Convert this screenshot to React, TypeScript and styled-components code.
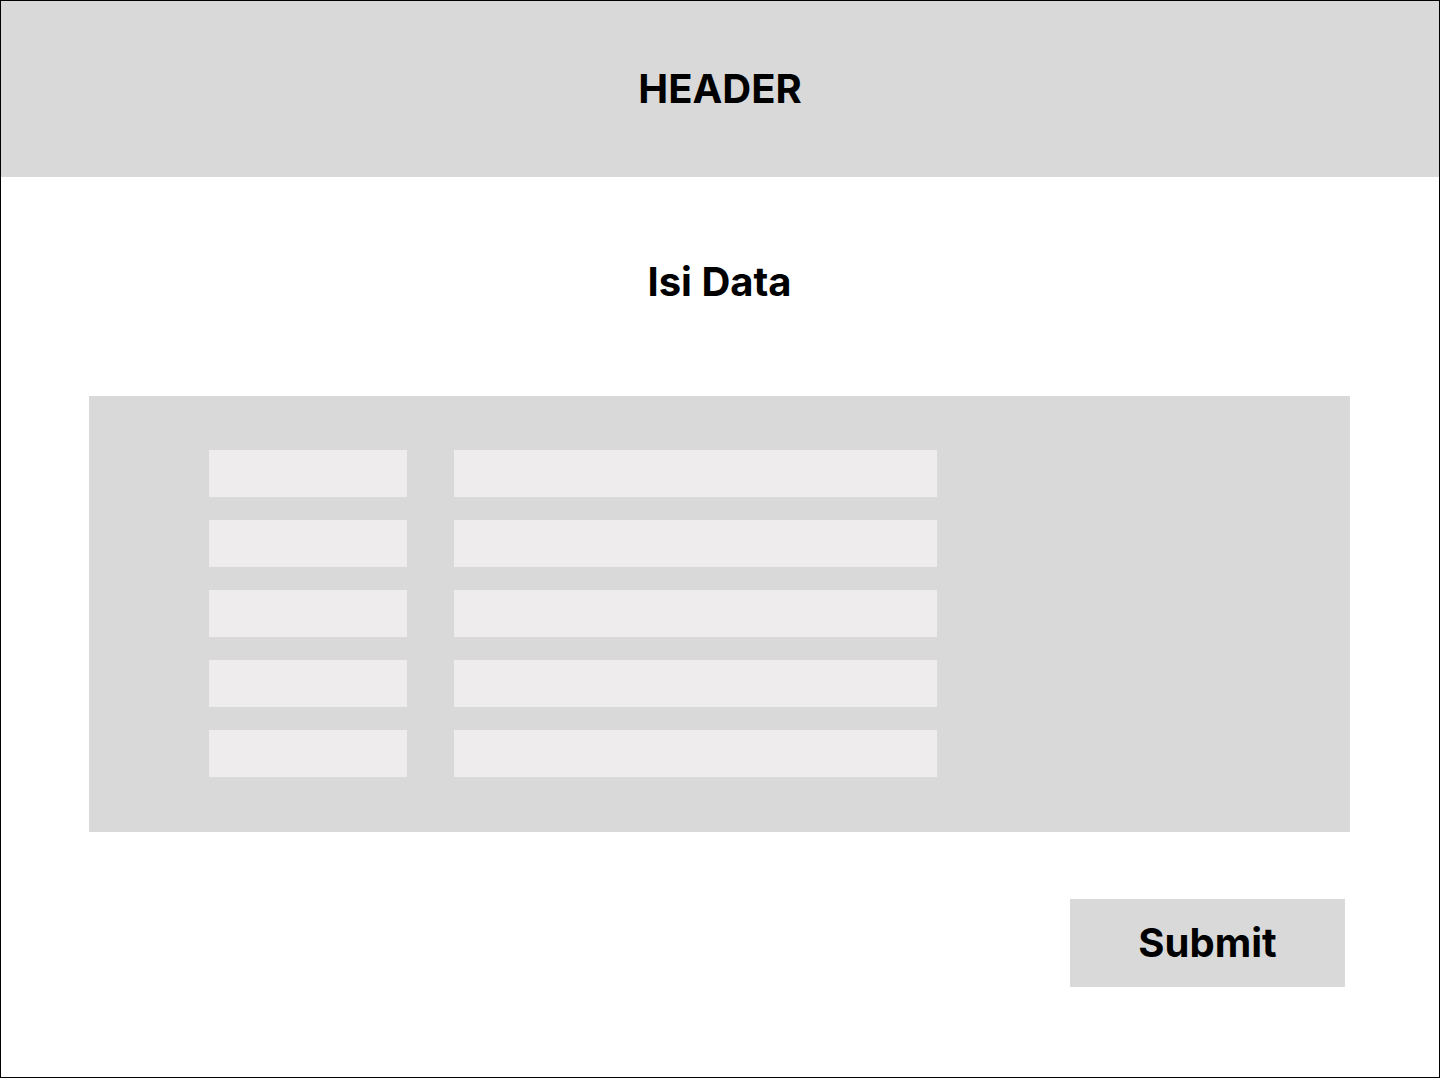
import React from "react";
import styled, { createGlobalStyle } from "styled-components";

const GlobalStyle = createGlobalStyle`
  *, *::before, *::after {
    box-sizing: border-box;
  }

  body {
    margin: 0;
    background: #ffffff;
    color: #000000;
    font-family: Inter, "Liberation Sans", sans-serif;
  }
`;

const Page = styled.div`
  display: flex;
  flex-direction: column;
  min-height: 100vh;
  border: 1px solid #000000;
`;

const Header = styled.header`
  display: flex;
  align-items: center;
  justify-content: center;
  padding: 64px 24px;
  background: #d9d9d9;
`;

const Heading = styled.h1`
  margin: 0;
  font-size: 40px;
  font-weight: 700;
  line-height: 48px;
  text-align: center;
`;

const Main = styled.main`
  padding: 81px 89px 81px 88px;
`;

const Form = styled.form`
  display: flex;
  flex-direction: column;
  margin-top: 90px;
`;

const Panel = styled.div`
  display: flex;
  flex-direction: column;
  gap: 23px;
  padding: 54px 120px 55px;
  background: #d9d9d9;
`;

const Row = styled.div`
  display: grid;
  grid-template-columns: minmax(0, 198px) minmax(0, 483px);
  gap: 47px;
`;

const Label = styled.label`
  height: 47px;
  background: #eeecec;
`;

const Field = styled.input`
  width: 100%;
  height: 47px;
  padding: 0 16px;
  border: 0;
  border-radius: 0;
  background: #eeecec;
  font: inherit;
`;

const Actions = styled.div`
  display: flex;
  justify-content: flex-end;
  padding: 67px 5px 0;
`;

const SubmitButton = styled.button`
  min-width: 275px;
  padding: 20px 24px;
  border: 0;
  background: #d9d9d9;
  color: inherit;
  font-family: inherit;
  font-size: 40px;
  font-weight: 700;
  line-height: 48px;
  cursor: pointer;
`;

const fields = ["field-1", "field-2", "field-3", "field-4", "field-5"];

export default function App() {
  return (
    <>
      <GlobalStyle />
      <Page>
        <Header>
          <Heading>HEADER</Heading>
        </Header>
        <Main>
          <Heading as="h2">Isi Data</Heading>
          <Form onSubmit={(event: React.FormEvent) => event.preventDefault()}>
            <Panel>
              {fields.map((id) => (
                <Row key={id}>
                  <Label htmlFor={id} />
                  <Field id={id} name={id} type="text" />
                </Row>
              ))}
            </Panel>
            <Actions>
              <SubmitButton type="submit">Submit</SubmitButton>
            </Actions>
          </Form>
        </Main>
      </Page>
    </>
  );
}
